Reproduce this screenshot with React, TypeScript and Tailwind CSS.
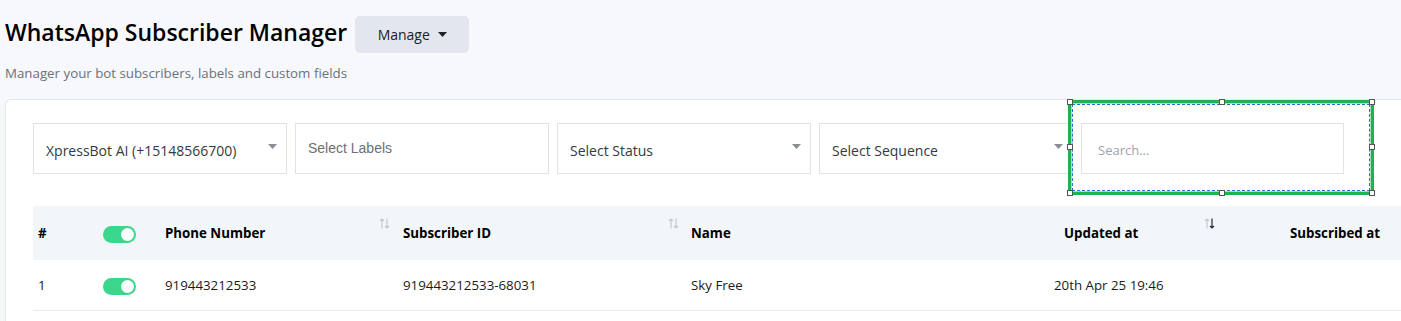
import React from 'react';

const font = { fontFamily: '"Open Sans", "Noto Sans", sans-serif' };

function Caret({ className = '' }: { className?: string }) {
  return (
    <svg width="9" height="5" viewBox="0 0 9 5" className={className}>
      <path d="M0 0h9L4.5 5z" fill="currentColor" />
    </svg>
  );
}

function SortIcon({ active }: { active?: boolean }) {
  return (
    <svg width="11" height="11" viewBox="0 0 11 11" className="shrink-0">
      <g fill="none" strokeWidth="1.2">
        <path d="M3 10.5V1M1 3l2-2 2 2" stroke="#c3c8d0" />
        <path d="M8 0.5V10M6 8l2 2 2-2" stroke={active ? '#1e2a3a' : '#c3c8d0'} />
      </g>
    </svg>
  );
}

function Toggle() {
  return (
    <div className="flex h-[17px] w-[33px] items-center justify-end rounded-full bg-[#3ad68b] pr-[2px]">
      <div className="size-[13px] rounded-full bg-white" />
    </div>
  );
}

function SelectBox({ label, muted, arial }: { label: string; muted?: boolean; arial?: boolean }) {
  return (
    <div className="flex h-[51px] w-[254px] shrink-0 items-center justify-between border border-[#dfe3e9] bg-white pl-[12px] pr-[9px]">
      <span
        className={`text-[14px] ${muted ? 'text-[#6b6f75]' : 'mt-[3px] text-[#333a42]'}`}
        style={arial ? { fontFamily: '"Liberation Sans", Arial, sans-serif' } : undefined}
      >
        {label}
      </span>
      {!muted && <Caret className="-mt-[5px] text-[#8a8d92]" />}
    </div>
  );
}

function Handle({ className }: { className: string }) {
  return <div className={`absolute size-[6px] border border-[#555] bg-white ${className}`} />;
}

const cols = [
  { w: 'w-[60px]', pl: 'pl-[5px]' },
  { w: 'w-[62px]', pl: 'pl-[10px]' },
  { w: 'w-[238px]', pl: 'pl-[10px]' },
  { w: 'w-[288px]', pl: 'pl-[10px]' },
  { w: 'w-[240px]', pl: 'pl-[10px]' },
  { w: 'w-[297px]', pl: 'pl-[143px]' },
  { w: 'w-[216px]', pl: 'pl-[72px]' },
];

export default function App() {
  return (
    <div className="h-[321px] w-[1401px] overflow-hidden bg-[#f6f8fc] text-[#111]" style={font}>
      <div className="pl-[5px] pt-[16px]">
        <div className="flex items-start gap-[8px]">
          <h1 className="text-[23px] font-semibold leading-[32px] text-black">WhatsApp Subscriber Manager</h1>
          <button
            type="button"
            className="flex h-[37px] w-[114px] items-center justify-center gap-[8px] rounded-[5px] bg-[#e3e6ee] text-[14px] text-[#1d2126]"
          >
            Manage
            <Caret className="text-[#1d2126]" />
          </button>
        </div>
        <p className="mt-[11px] text-[13.3px] leading-[18px] text-[#6c7178]">
          Manager your bot subscribers, labels and custom fields
        </p>
      </div>

      <div className="ml-[5px] mt-[17px] h-[230px] rounded-tl-[6px] border-l border-t border-[#e4e7ee] bg-white pl-[27px] pt-[23px]">
        <div className="flex gap-[8px]">
          <SelectBox label="XpressBot AI (+15148566700)" />
          <SelectBox label="Select Labels" muted arial />
          <SelectBox label="Select Status" />
          <SelectBox label="Select Sequence" />
          <div className="relative">
            <input
              placeholder="Search..."
              className="h-[51px] w-[263px] border border-[#dfe3e9] bg-white pl-[16px] pt-[3px] text-[13px] outline-none placeholder:text-[#9aa3b1]"
              style={font}
            />
            <div className="pointer-events-none absolute left-[-13px] top-[-23px] h-[95px] w-[306px] border-[4px] border-[#22b14c]">
              <div className="h-full w-full border border-dashed border-[#1e73d8] outline outline-1 outline-white/60" />
              <Handle className="left-[-5px] top-[-5px]" />
              <Handle className="left-[147px] top-[-5px]" />
              <Handle className="right-[-5px] top-[-5px]" />
              <Handle className="left-[-5px] top-[40px]" />
              <Handle className="right-[-5px] top-[40px]" />
              <Handle className="bottom-[-5px] left-[-5px]" />
              <Handle className="bottom-[-5px] left-[147px]" />
              <Handle className="bottom-[-5px] right-[-5px]" />
            </div>
          </div>
        </div>

        <div className="mt-[32px] text-[13.3px]">
          <div className="flex h-[54px] bg-[#f3f6f9] pt-[2px] font-bold text-black">
            <div className={`${cols[0].w} ${cols[0].pl} flex shrink-0 items-center`}>#</div>
            <div className={`${cols[1].w} ${cols[1].pl} flex shrink-0 items-center`}>
              <Toggle />
            </div>
            <div className={`${cols[2].w} ${cols[2].pl} flex shrink-0 justify-between pr-[3px]`}>
              <span className="self-center">Phone Number</span>
              <span className="mt-[10px]"><SortIcon /></span>
            </div>
            <div className={`${cols[3].w} ${cols[3].pl} flex shrink-0 justify-between pr-[2px]`}>
              <span className="self-center">Subscriber ID</span>
              <span className="mt-[10px]"><SortIcon /></span>
            </div>
            <div className={`${cols[4].w} ${cols[4].pl} flex shrink-0 items-center`}>Name</div>
            <div className={`${cols[5].w} ${cols[5].pl} flex shrink-0 justify-between pr-[3px]`}>
              <span className="self-center">Updated at</span>
              <span className="mt-[10px]"><SortIcon active /></span>
            </div>
            <div className={`${cols[6].w} ${cols[6].pl} flex shrink-0 items-center`}>Subscribed at</div>
          </div>
          <div className="flex h-[51px] border-b border-[#e8eaf2] pt-[2px] text-[#1a1a1a]">
            <div className={`${cols[0].w} ${cols[0].pl} flex shrink-0 items-center`}>1</div>
            <div className={`${cols[1].w} ${cols[1].pl} flex shrink-0 items-center`}>
              <Toggle />
            </div>
            <div className={`${cols[2].w} ${cols[2].pl} flex shrink-0 items-center`}>919443212533</div>
            <div className={`${cols[3].w} ${cols[3].pl} flex shrink-0 items-center`}>919443212533-68031</div>
            <div className={`${cols[4].w} ${cols[4].pl} flex shrink-0 items-center`}>Sky Free</div>
            <div className={`${cols[5].w} flex shrink-0 items-center pl-[133px]`}>20th Apr 25 19:46</div>
            <div className={`${cols[6].w} ${cols[6].pl} flex shrink-0 items-center`} />
          </div>
        </div>
      </div>
    </div>
  );
}
